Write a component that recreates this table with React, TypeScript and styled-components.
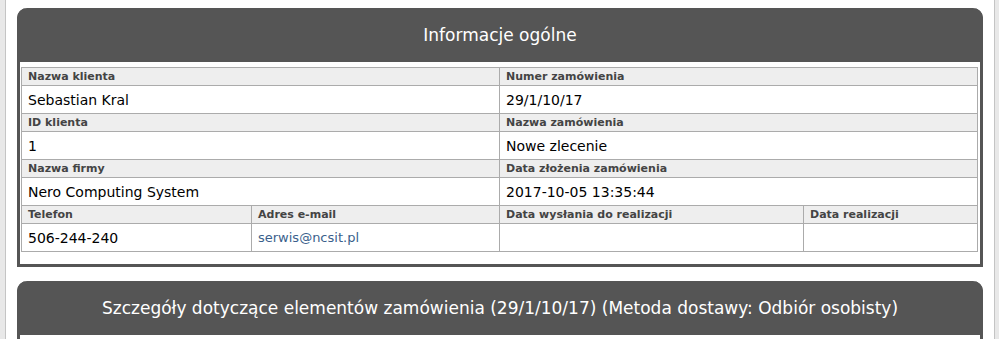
import styled, { createGlobalStyle } from 'styled-components'

const GlobalStyle = createGlobalStyle`
  html, body {
    margin: 0;
    padding: 0;
    background: #e8e8e8;
  }
  body {
    font-family: "DejaVu Sans", Verdana, sans-serif;
  }
`;

const Frame = styled.div`
  padding: 0 4px 0 5px;
  min-height: 339px;
  box-sizing: border-box;
`;

const Content = styled.main`
  background: #fff;
  border-left: 1px solid #c4c4c4;
  border-right: 1px solid #c4c4c4;
  min-height: 339px;
  padding: 8px 11px 0 11px;
  display: flex;
  flex-direction: column;
  gap: 14px;
`;

const Panel = styled.section`
  border: 3px solid #555;
  border-top: none;
  border-radius: 10px 10px 0 0;
  background: #fff;
`;

const PanelHeader = styled.header`
  background: #555;
  color: #fff;
  margin: 0 -3px;
  border-radius: 10px 10px 0 0;
  height: 54px;
  display: flex;
  align-items: center;
  justify-content: center;
  font-size: 17px;
`;

const PanelBody = styled.div`
  padding: 5px 2px 12px 1px;
`;

const Grid = styled.div`
  display: grid;
  grid-template-columns: 230px 248px 304px 1fr;
  border-top: 1px solid #ababab;
  border-left: 1px solid #ababab;
`;

const Label = styled.div<{ $span: number }>`
  grid-column: span ${(p) => p.$span};
  background: #eee;
  border-right: 1px solid #ababab;
  border-bottom: 1px solid #ababab;
  height: 17px;
  padding: 0 6px;
  display: flex;
  align-items: center;
  font-size: 11px;
  font-weight: bold;
  color: #444;
  white-space: nowrap;
  overflow: hidden;
`;

const Value = styled.div<{ $span: number }>`
  grid-column: span ${(p) => p.$span};
  border-right: 1px solid #ababab;
  border-bottom: 1px solid #ababab;
  height: 27px;
  padding: 0 6px;
  display: flex;
  align-items: center;
  font-size: 14px;
  color: #000;
  white-space: nowrap;
`;

const Mail = styled.a`
  color: #3b5f8c;
  text-decoration: none;
  font-size: 13px;
`;

type Field = { label: string; value: React.ReactNode; span: number };

const rows: Field[][] = [
  [
    { label: 'Nazwa klienta', value: 'Sebastian Kral', span: 2 },
    { label: 'Numer zamówienia', value: '29/1/10/17', span: 2 },
  ],
  [
    { label: 'ID klienta', value: '1', span: 2 },
    { label: 'Nazwa zamówienia', value: 'Nowe zlecenie', span: 2 },
  ],
  [
    { label: 'Nazwa firmy', value: 'Nero Computing System', span: 2 },
    { label: 'Data złożenia zamówienia', value: '2017-10-05 13:35:44', span: 2 },
  ],
  [
    { label: 'Telefon', value: '506-244-240', span: 1 },
    { label: 'Adres e-mail', value: <Mail href="#">serwis@ncsit.pl</Mail>, span: 1 },
    { label: 'Data wysłania do realizacji', value: '', span: 1 },
    { label: 'Data realizacji', value: '', span: 1 },
  ],
];

export default function App() {
  return (
    <>
      <GlobalStyle />
      <Frame>
        <Content>
          <Panel>
            <PanelHeader>Informacje ogólne</PanelHeader>
            <PanelBody>
              <Grid>
                {rows.map((row, i) => (
                  <>
                    {row.map((f) => (
                      <Label key={`l${i}${f.label}`} $span={f.span}>{f.label}</Label>
                    ))}
                    {row.map((f) => (
                      <Value key={`v${i}${f.label}`} $span={f.span}>{f.value}</Value>
                    ))}
                  </>
                ))}
              </Grid>
            </PanelBody>
          </Panel>
          <Panel>
            <PanelHeader>
              Szczegóły dotyczące elementów zamówienia (29/1/10/17) (Metoda dostawy: Odbiór osobisty)
            </PanelHeader>
            <PanelBody />
          </Panel>
        </Content>
      </Frame>
    </>
  )
}
